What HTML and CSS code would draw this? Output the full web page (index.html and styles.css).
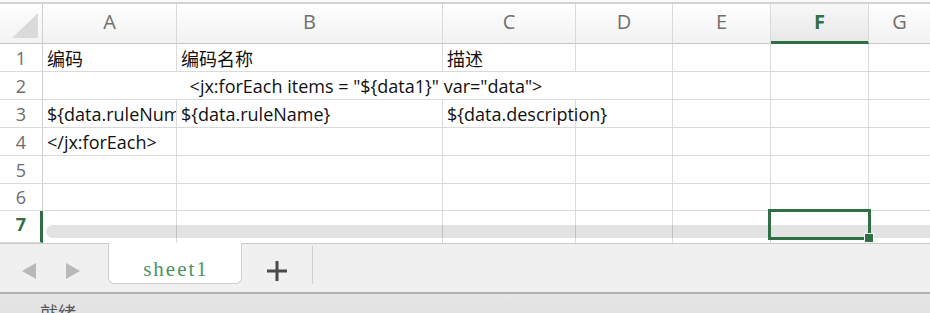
FILE: index.html
```html
<!DOCTYPE html>
<html lang="zh">
<head>
<meta charset="utf-8">
<title>sheet1</title>
<link rel="stylesheet" href="styles.css">
</head>
<body>
<div class="app">
  <div class="sheet">
    <div class="topline"></div>
    <div class="grid">
      <div class="corner"><svg width="27" height="26" viewBox="0 0 27 26"><polygon points="26,0 26,25 0,25" fill="#dadada"/></svg></div>
      <div class="ch">A</div>
      <div class="ch">B</div>
      <div class="ch">C</div>
      <div class="ch">D</div>
      <div class="ch">E</div>
      <div class="ch ch-sel">F</div>
      <div class="ch ch-last">G</div>

      <div class="rh">1</div>
      <div class="c">编码</div>
      <div class="c">编码名称</div>
      <div class="c">描述</div>
      <div class="c"></div>
      <div class="c"></div>
      <div class="c"></div>
      <div class="c c-last"></div>

      <div class="rh">2</div>
      <div class="c c-merge">&lt;jx:forEach items = "${data1}" var="data"&gt;</div>
      <div class="c"></div>
      <div class="c"></div>
      <div class="c c-last"></div>

      <div class="rh">3</div>
      <div class="c">${data.ruleNumber}</div>
      <div class="c">${data.ruleName}</div>
      <div class="c c-spill">${data.description}</div>
      <div class="c"></div>
      <div class="c"></div>
      <div class="c"></div>
      <div class="c c-last"></div>

      <div class="rh">4</div>
      <div class="c">&lt;/jx:forEach&gt;</div>
      <div class="c"></div>
      <div class="c"></div>
      <div class="c"></div>
      <div class="c"></div>
      <div class="c"></div>
      <div class="c c-last"></div>

      <div class="rh">5</div>
      <div class="c"></div>
      <div class="c"></div>
      <div class="c"></div>
      <div class="c"></div>
      <div class="c"></div>
      <div class="c"></div>
      <div class="c c-last"></div>

      <div class="rh">6</div>
      <div class="c"></div>
      <div class="c"></div>
      <div class="c"></div>
      <div class="c"></div>
      <div class="c"></div>
      <div class="c"></div>
      <div class="c c-last"></div>

      <div class="rh rh-sel">7</div>
      <div class="c c-end"></div>
      <div class="c c-end"></div>
      <div class="c c-end"></div>
      <div class="c c-end"></div>
      <div class="c c-end"></div>
      <div class="c c-end"></div>
      <div class="c c-end c-last"></div>
    </div>
    <div class="hscroll"></div>
    <div class="selection"><span class="handle"></span></div>
  </div>

  <div class="tabbar">
    <div class="navs">
      <svg class="nav" width="15" height="16" viewBox="0 0 15 16"><polygon points="14,0 14,16 0,8" fill="#b9b9b9"/></svg>
      <svg class="nav" width="15" height="16" viewBox="0 0 15 16"><polygon points="1,0 1,16 15,8" fill="#b9b9b9"/></svg>
    </div>
    <div class="tab">sheet1</div>
    <div class="add"><svg width="20" height="20" viewBox="0 0 20 20"><rect x="0" y="8.5" width="20" height="3" fill="#4a4a4a"/><rect x="8.5" y="0" width="3" height="20" fill="#4a4a4a"/></svg></div>
    <div class="sep"></div>
  </div>

  <div class="status">就绪</div>
</div>
</body>
</html>
```

FILE: styles.css
```css
* { box-sizing: border-box; }
html, body {
  margin: 0;
  padding: 0;
  background: #ffffff;
}
.app {
  width: 930px;
  height: 313px;
  overflow: hidden;
  display: flex;
  flex-direction: column;
  font-family: "Open Sans", "Noto Sans CJK SC", sans-serif;
}
.sheet {
  position: relative;
  height: 243px;
  flex: none;
  overflow: hidden;
}
.topline {
  height: 4px;
  background: #fafafa;
  border-bottom: 2px solid #d2d2d2;
}
.grid {
  display: grid;
  grid-template-columns: 43px 134px 266px 133px 97px 98px 98px 1fr;
  grid-template-rows: 40px 28px 28px 28px 28px 28px 27px 32px;
}
.corner {
  background: linear-gradient(#fefefe, #f3f3f3);
  border-right: 1px solid #cfcfcf;
  border-bottom: 1px solid #c6c6c6;
  display: flex;
  align-items: flex-start;
  justify-content: flex-start;
  padding: 9px 0 0 12px;
}
.ch {
  background: linear-gradient(#fefefe, #f2f2f2);
  border-right: 1px solid #dadada;
  border-bottom: 1px solid #c6c6c6;
  display: flex;
  align-items: center;
  justify-content: center;
  font-size: 20px;
  color: #707070;
  padding-bottom: 4px;
}
.ch-sel {
  background: linear-gradient(#f8f8f8, #e8e8e8);
  border-bottom: 3px solid #2e7044;
  color: #2e7044;
  font-weight: bold;
  padding-bottom: 2px;
}
.ch-last { border-right: none; }
.rh {
  border-right: 1px solid #cfcfcf;
  border-bottom: 1px solid #dcdcdc;
  display: flex;
  align-items: center;
  justify-content: center;
  font-size: 18px;
  color: #6c6c6c;
  background: #ffffff;
}
.rh-sel {
  color: #2e7044;
  font-weight: bold;
  border-right: 3px solid #2e7044;
  padding-left: 2px;
  align-items: flex-start;
  padding-top: 1px;
}
.c {
  border-right: 1px solid #dadada;
  border-bottom: 1px solid #dadada;
  display: flex;
  align-items: center;
  padding: 0 0 0 4px;
  font-size: 18px;
  color: #111;
  white-space: nowrap;
  overflow: hidden;
}
.c-last { border-right: none; }
.c-merge {
  grid-column: span 4;
  justify-content: center;
  padding-left: 17px;
  overflow: visible;
}
.c-spill {
  overflow: visible;
  position: relative;
  z-index: 1;
}
.c-end { border-bottom: none; }
.hscroll {
  position: absolute;
  left: 46px;
  right: 0;
  top: 225px;
  height: 13px;
  border-radius: 7px 0 0 7px;
  background: rgba(0, 0, 0, 0.11);
}
.selection {
  position: absolute;
  left: 768px;
  top: 209px;
  width: 103px;
  height: 31px;
  border: 3px solid #2e7044;
}
.handle {
  position: absolute;
  right: -6px;
  bottom: -6px;
  width: 10px;
  height: 10px;
  background: #2e7044;
  border: 1px solid #ffffff;
}
.tabbar {
  height: 49px;
  flex: none;
  background: #f0f0f0;
  border-top: 1px solid #cacaca;
  display: flex;
  align-items: flex-start;
}
.navs {
  width: 108px;
  display: flex;
  gap: 28px;
  padding: 19px 0 0 22px;
}
.tab {
  width: 134px;
  height: 41px;
  margin-top: -1px;
  background: #ffffff;
  border: 1px solid #cfcfcf;
  border-top: none;
  border-radius: 0 0 6px 6px;
  display: flex;
  align-items: center;
  justify-content: center;
  padding-top: 13px;
  padding-left: 2px;
  font-family: "Liberation Serif", serif;
  font-size: 21px;
  letter-spacing: 2px;
  color: #4a9463;
}
.add {
  width: 70px;
  display: flex;
  justify-content: center;
  padding-top: 17px;
}
.sep {
  width: 1px;
  height: 38px;
  margin-top: 2px;
  background: #d0d0d0;
}
.status {
  flex: 1;
  background: linear-gradient(#e6e6e6, #e0e0e0);
  border-top: 2px solid #b0b0b0;
  padding: 8px 0 0 40px;
  font-size: 18px;
  color: #555;
  font-family: "Noto Sans CJK SC", sans-serif;
  line-height: 20px;
}
```
